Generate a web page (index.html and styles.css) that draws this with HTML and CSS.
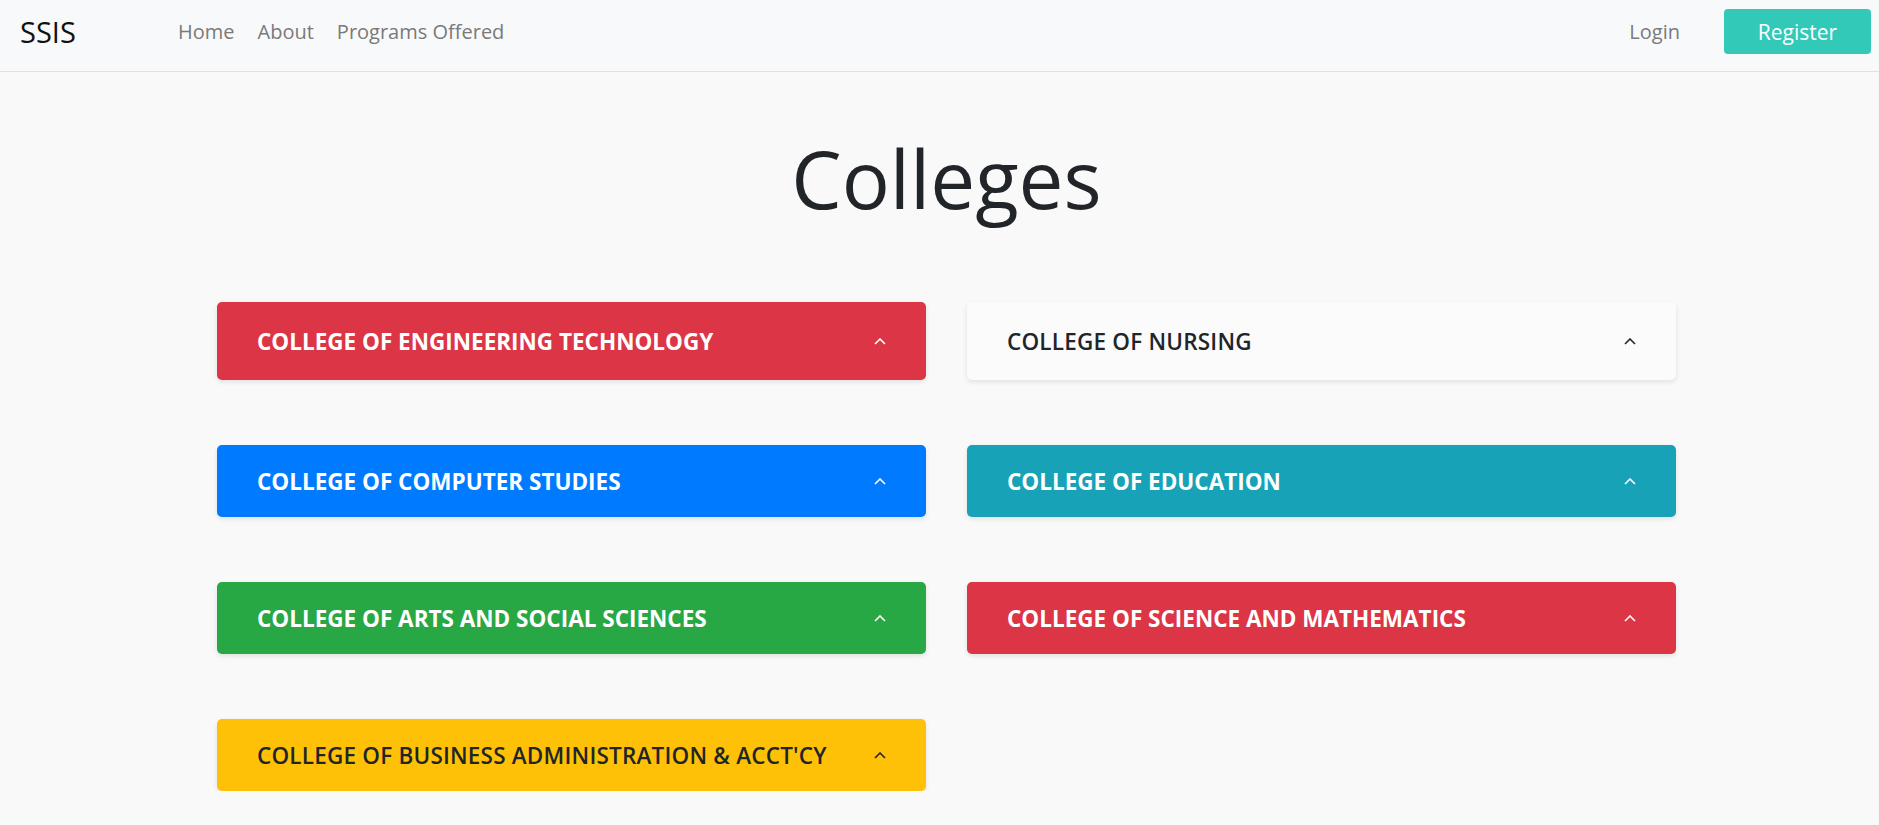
FILE: index.html
```html
<!DOCTYPE html>
<html lang="en">
<head>
<meta charset="utf-8">
<title>SSIS - Colleges</title>
<link rel="stylesheet" href="styles.css">
</head>
<body>
<nav class="navbar">
  <a class="brand" href="#">SSIS</a>
  <ul class="nav-links">
    <li><a href="#">Home</a></li>
    <li><a href="#">About</a></li>
    <li><a href="#">Programs Offered</a></li>
  </ul>
  <div class="nav-right">
    <a class="login" href="#">Login</a>
    <a class="register" href="#">Register</a>
  </div>
</nav>
<main class="container">
  <h1 class="title">Colleges</h1>
  <div class="grid">
    <div class="card red"><span>COLLEGE OF ENGINEERING TECHNOLOGY</span><svg class="chev" viewBox="0 0 12 7"><path d="M1 6 L6 1 L11 6"/></svg></div>
    <div class="card light"><span>COLLEGE OF NURSING</span><svg class="chev" viewBox="0 0 12 7"><path d="M1 6 L6 1 L11 6"/></svg></div>
    <div class="card blue"><span>COLLEGE OF COMPUTER STUDIES</span><svg class="chev" viewBox="0 0 12 7"><path d="M1 6 L6 1 L11 6"/></svg></div>
    <div class="card teal"><span>COLLEGE OF EDUCATION</span><svg class="chev" viewBox="0 0 12 7"><path d="M1 6 L6 1 L11 6"/></svg></div>
    <div class="card green"><span>COLLEGE OF ARTS AND SOCIAL SCIENCES</span><svg class="chev" viewBox="0 0 12 7"><path d="M1 6 L6 1 L11 6"/></svg></div>
    <div class="card red"><span>COLLEGE OF SCIENCE AND MATHEMATICS</span><svg class="chev" viewBox="0 0 12 7"><path d="M1 6 L6 1 L11 6"/></svg></div>
    <div class="card yellow"><span>COLLEGE OF BUSINESS ADMINISTRATION &amp; ACCT'CY</span><svg class="chev" viewBox="0 0 12 7"><path d="M1 6 L6 1 L11 6"/></svg></div>
  </div>
</main>
</body>
</html>
```
FILE: styles.css
```css
* { box-sizing: border-box; }
html, body { margin: 0; padding: 0; }
body {
  background: #f9f9f9;
  font-family: "Open Sans", "Noto Sans", sans-serif;
  color: #212529;
  overflow: hidden;
}
a { text-decoration: none; }
.navbar {
  height: 72px;
  background: #f8f9fa;
  border-bottom: 1px solid #dee2e6;
  display: flex;
  align-items: center;
  padding: 0 8px 8px 20px;
}
.brand {
  font-size: 29px;
  color: #111;
  width: 158px;
}
.nav-links {
  list-style: none;
  margin: 0;
  padding: 0;
  display: flex;
  gap: 23px;
}
.nav-links a, .login {
  font-size: 20px;
  color: #7a7a7a;
}
.nav-right {
  margin-left: auto;
  display: flex;
  align-items: center;
  gap: 44px;
}
.register {
  background: #33c9b8;
  color: #fff;
  font-size: 21px;
  width: 147px;
  height: 45px;
  border-radius: 4px;
  display: flex;
  align-items: center;
  justify-content: center;
}
.container {
  width: 1473px;
  margin: 0 auto;
  padding-left: 14px;
}
.title {
  text-align: center;
  font-weight: 400;
  font-size: 80px;
  margin: 58px 0 76px;
  line-height: 1.2;
}
.grid {
  display: grid;
  grid-template-columns: 709px 709px;
  grid-template-rows: 78px;
  grid-auto-rows: 72px;
  column-gap: 41px;
  row-gap: 65px;
}
.card {
  border-radius: 5px;
  box-shadow: 0 2px 5px rgba(0,0,0,.1);
  display: flex;
  align-items: center;
  justify-content: space-between;
  padding: 0 40px;
  font-weight: 700;
  font-size: 22.5px;
  color: #fff;
}
.chev {
  width: 12px;
  height: 7px;
  fill: none;
  stroke: currentColor;
  stroke-width: 1.6;
}
.red { background: #dc3545; }
.blue { background: #007bff; }
.teal { background: #17a2b8; }
.green { background: #28a745; }
.yellow { background: #ffc107; color: #212529; }
.light { background: #fbfbfb; color: #212529; }
.yellow span, .light span { font-weight: 600; letter-spacing: 0.2px; }
```
